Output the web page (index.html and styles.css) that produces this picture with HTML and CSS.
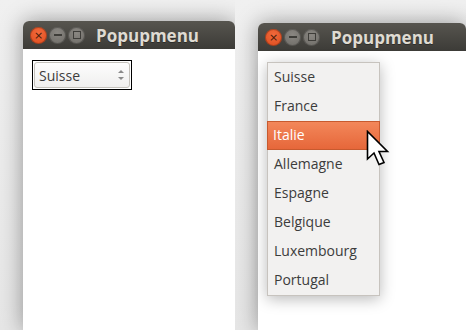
FILE: index.html
```html
<!DOCTYPE html>
<html>
<head lang="fr">
    <meta charset="UTF-8">
    <title>Popupmenu</title>
    <link rel="stylesheet" href="styles.css">
</head>
<body>
    <div class="shot shot-left">
        <div class="window">
            <div class="titlebar">
                <span class="btn btn-close">&times;</span>
                <span class="btn btn-min"><i class="bar"></i></span>
                <span class="btn btn-max"><i class="box"></i></span>
                <span class="title">Popupmenu</span>
            </div>
            <div class="body">
                <div class="focus">
                    <div class="combo">
                        <span class="combo-text">Suisse</span>
                        <span class="spin">
                            <i class="up"></i>
                            <i class="down"></i>
                        </span>
                    </div>
                </div>
            </div>
        </div>
    </div>
    <div class="shot shot-right">
        <div class="window">
            <div class="titlebar">
                <span class="btn btn-close">&times;</span>
                <span class="btn btn-min"><i class="bar"></i></span>
                <span class="btn btn-max"><i class="box"></i></span>
                <span class="title">Popupmenu</span>
            </div>
            <div class="body">
                <ul class="menu">
                    <li>Suisse</li>
                    <li>France</li>
                    <li class="selected">Italie</li>
                    <li>Allemagne</li>
                    <li>Espagne</li>
                    <li>Belgique</li>
                    <li>Luxembourg</li>
                    <li>Portugal</li>
                </ul>
                <svg class="cursor" width="24" height="38" viewBox="0 0 24 38">
                    <path d="M1.5 1.5 L1.5 29 L8 23 L13 34.5 L18 32.5 L13 21.5 L21.5 21.5 Z" fill="#fff" stroke="#000" stroke-width="1.6" stroke-linejoin="miter"/>
                </svg>
            </div>
        </div>
    </div>
</body>
</html>
```

FILE: styles.css
```css
*{
    padding: 0;
    margin: 0;
    box-sizing: border-box;
}
ul{
    list-style: none;
}
html, body{
    width: 466px;
    height: 330px;
    overflow: hidden;
}
body{
    display: flex;
    font-family: "Open Sans", "DejaVu Sans", sans-serif;
    background: #ececec;
}
.shot{
    height: 330px;
    overflow: hidden;
    background: linear-gradient(#f0f0f0, #e6e6e6);
    display: flex;
}
.shot-left{
    width: 235px;
    padding: 21px 0 0 23px;
}
.shot-right{
    width: 231px;
    padding: 23px 0 0 23px;
}
.window{
    flex: 1;
    width: 240px;
    display: flex;
    flex-direction: column;
    background: #fff;
    border-radius: 6px 6px 0 0;
    box-shadow: 0 0 22px rgba(0,0,0,.38);
}
.titlebar{
    height: 28px;
    flex: none;
    display: flex;
    align-items: center;
    padding-left: 7px;
    border-radius: 6px 6px 0 0;
    background: linear-gradient(#57554f, #3c3b37);
}
.btn{
    width: 17px;
    height: 17px;
    border-radius: 50%;
    margin-right: 2px;
    display: flex;
    align-items: center;
    justify-content: center;
    background: radial-gradient(circle at 50% 35%, #8a8782, #6c6a65);
    box-shadow: inset 0 0 0 1px rgba(0,0,0,.25);
}
.btn-close{
    background: radial-gradient(circle at 50% 35%, #f26a3c, #dc4a1c);
    color: #4a1a08;
    font-family: "DejaVu Sans", sans-serif;
    font-size: 11px;
    line-height: 17px;
}
.bar{
    width: 8px;
    height: 2px;
    background: #3e3d39;
}
.box{
    width: 8px;
    height: 8px;
    border: 1.5px solid #3e3d39;
}
.title{
    margin-left: 9px;
    color: #dfdbd2;
    font-weight: bold;
    font-size: 17px;
    text-shadow: 0 1px 0 #2e2d2a;
}
.body{
    flex: 1;
    position: relative;
    padding: 11px 0 0 9px;
}
.focus{
    width: 100px;
    height: 30px;
    border: 1px solid #000;
    padding: 1px;
}
.combo{
    height: 100%;
    display: flex;
    align-items: center;
    justify-content: space-between;
    padding: 0 5px 0 4px;
    border: 1px solid #c4c1bb;
    border-radius: 3px;
    background: linear-gradient(#fdfdfd, #f0efee);
}
.combo-text{
    font-size: 14px;
    color: #3c3c3c;
}
.spin{
    display: flex;
    flex-direction: column;
    gap: 4px;
}
.spin i{
    width: 0;
    height: 0;
    border-left: 3px solid transparent;
    border-right: 3px solid transparent;
}
.spin .up{
    border-bottom: 3px solid #8a8a8a;
}
.spin .down{
    border-top: 3px solid #8a8a8a;
}
.menu{
    position: absolute;
    left: 9px;
    top: 11px;
    width: 113px;
    border: 1px solid #c7c3be;
    background: #f2f1f0;
    box-shadow: 0 3px 14px rgba(0,0,0,.28);
}
.menu li{
    height: 29px;
    line-height: 28px;
    padding-left: 6px;
    font-size: 14px;
    color: #3c3c3c;
}
.menu .selected{
    color: #fff;
    background: linear-gradient(#f3875a, #e6673a);
    border: 1px solid #c75a2f;
    line-height: 26px;
    padding-left: 5px;
    margin: 0 -1px;
}
.cursor{
    position: absolute;
    left: 108px;
    top: 79px;
}
```
